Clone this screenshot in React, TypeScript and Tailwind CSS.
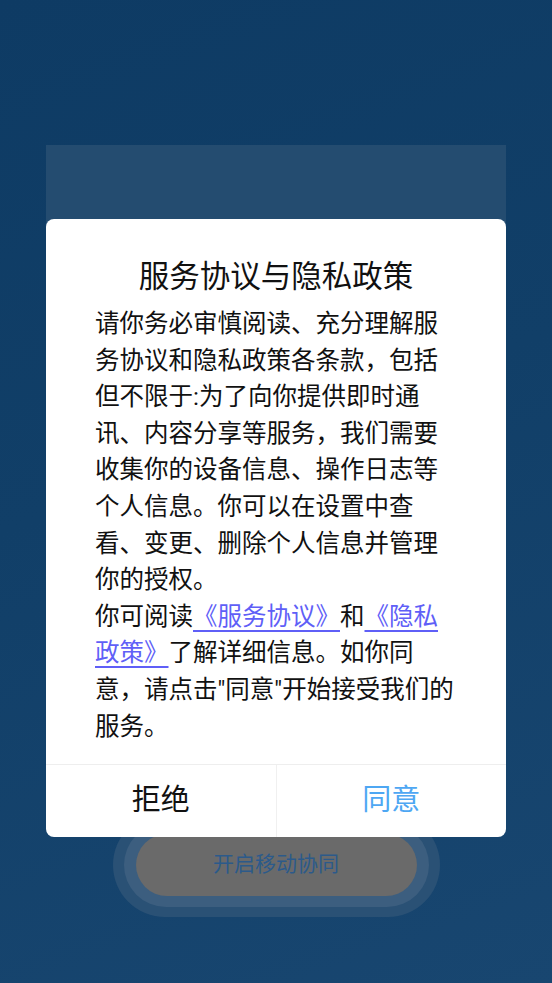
export default function App() {
  return (
    <div
      className="relative w-full min-h-[983px] overflow-hidden bg-[linear-gradient(160deg,#0e3b64_0%,#113f68_45%,#184670_100%)]"
      style={{ fontFamily: 'Roboto, "Noto Sans CJK SC", sans-serif' }}
    >
      {/* page underneath the modal */}
      <div className="pt-[145px] flex flex-col items-center">
        <div className="w-[460px] h-[600px] bg-[#244c70]" />
        <div className="mt-[68px] w-[327px] h-[104px] rounded-full bg-[#2a5175] flex items-center justify-center">
          <div className="w-[305px] h-[84px] rounded-full bg-[#3c5e7f] flex items-center justify-center">
            <div className="w-[281px] h-[62px] rounded-full bg-[#6a6a6a] flex items-center justify-center text-[21px] text-[#2c5a8a]">
              开启移动协同
            </div>
          </div>
        </div>
      </div>

      {/* modal */}
      <div className="absolute left-[46px] top-[219px] w-[460px] rounded-[8px] bg-white flex flex-col">
        <h2 className="pt-[38px] text-center text-[30.5px] leading-[40px] text-[#111]">
          服务协议与隐私政策
        </h2>
        <div className="mt-[9px] px-[49px] text-[24.5px] leading-[36.6px] text-[#111]">
          <p>
            请你务必审慎阅读、充分理解服务协议和隐私政策各条款，包括但不限于:为了向你提供即时通讯、内容分享等服务，我们需要收集你的设备信息、操作日志等个人信息。你可以在设置中查看、变更、删除个人信息并管理你的授权。
          </p>
          <p>
            你可阅读
            <a className="text-[#5f5ff7] underline underline-offset-[5px]">《服务协议》</a>
            和
            <a className="text-[#5f5ff7] underline underline-offset-[5px]">《隐私政策》</a>
            了解详细信息。如你同意，请点击"同意"开始接受我们的服务。
          </p>
        </div>
        <div className="mt-[19px] h-[73px] flex border-t border-[#eeeeee]">
          <button className="flex-1 flex items-center justify-center text-[29px] text-[#111]">
            拒绝
          </button>
          <div className="w-px bg-[#f0f0f0]" />
          <button className="flex-1 flex items-center justify-center text-[29px] text-[#4ea7f3]">
            同意
          </button>
        </div>
      </div>
    </div>
  );
}
